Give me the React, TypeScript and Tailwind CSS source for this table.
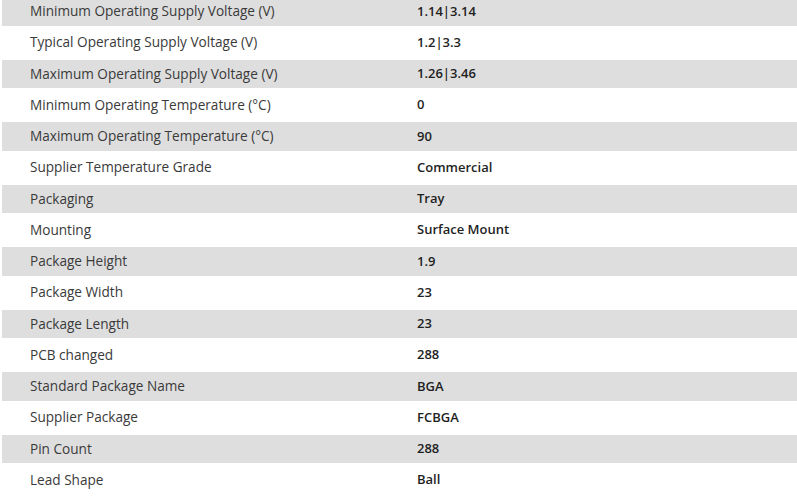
import React from "react";

const rows: [string, string][] = [
  ["Minimum Operating Supply Voltage (V)", "1.14|3.14"],
  ["Typical Operating Supply Voltage (V)", "1.2|3.3"],
  ["Maximum Operating Supply Voltage (V)", "1.26|3.46"],
  ["Minimum Operating Temperature (°C)", "0"],
  ["Maximum Operating Temperature (°C)", "90"],
  ["Supplier Temperature Grade", "Commercial"],
  ["Packaging", "Tray"],
  ["Mounting", "Surface Mount"],
  ["Package Height", "1.9"],
  ["Package Width", "23"],
  ["Package Length", "23"],
  ["PCB changed", "288"],
  ["Standard Package Name", "BGA"],
  ["Supplier Package", "FCBGA"],
  ["Pin Count", "288"],
  ["Lead Shape", "Ball"],
];

export default function App() {
  return (
    <div
      className="w-[797px] h-[500px] overflow-hidden bg-white"
      style={{ fontFamily: '"Open Sans", "Noto Sans", sans-serif' }}
    >
      <div className="flex flex-col gap-[2.5px] pl-[2px] mt-[-3px]">
        {rows.map(([k, v], i) => (
          <div
            key={i}
            className={`flex items-center h-[28.75px] ${i % 2 === 0 ? "bg-[#dedede]" : "bg-white"}`}
          >
            <div className="w-[415px] shrink-0 pl-[28px] text-[13.6px] text-[#3a3a3a]">{k}</div>
            <div className="text-[13px] font-semibold text-[#1f1f1f]">{v}</div>
          </div>
        ))}
      </div>
    </div>
  );
}
